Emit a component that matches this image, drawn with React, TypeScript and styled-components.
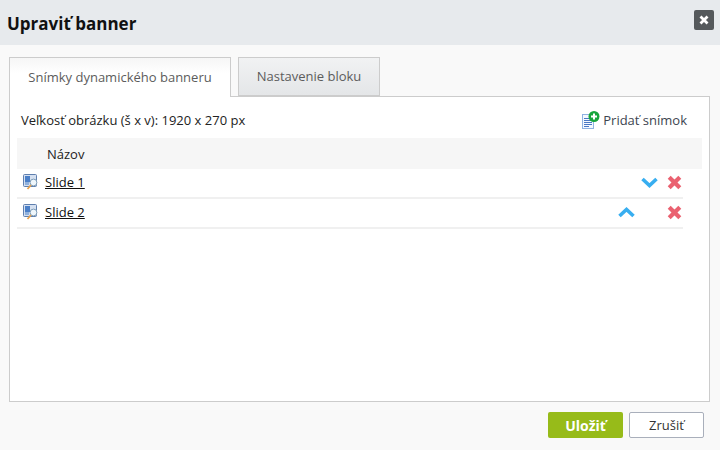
import styled, { createGlobalStyle } from "styled-components";

const GlobalStyle = createGlobalStyle`
  html, body {
    margin: 0;
    padding: 0;
  }
  body {
    font-family: "Open Sans", "Noto Sans", sans-serif;
    background: #f9f9f9;
  }
`;

const Dialog = styled.div`
  width: 720px;
  height: 450px;
  display: flex;
  flex-direction: column;
  overflow: hidden;
  background: #f9f9f9;
`;

const Header = styled.div`
  height: 45px;
  flex: none;
  background: #e7eaed;
  display: flex;
  align-items: center;
  justify-content: space-between;
  padding: 0 6px 0 7px;
`;

const Title = styled.div`
  font-size: 17px;
  font-weight: 700;
  color: #111;
  margin-top: 1px;
`;

const CloseButton = styled.button`
  width: 20px;
  height: 20px;
  padding: 0;
  border: 0;
  border-radius: 2px;
  background: #55595c;
  display: flex;
  align-items: center;
  justify-content: center;
  margin-top: -5px;
`;

const Content = styled.div`
  flex: 1;
  padding: 12px 10px 0 9px;
  display: flex;
  flex-direction: column;
`;

const Tabs = styled.div`
  display: flex;
  gap: 7px;
  height: 40px;
  flex: none;
  margin-bottom: -1px;
  position: relative;
`;

const Tab = styled.div<{ $active?: boolean }>`
  box-sizing: border-box;
  width: ${(p) => (p.$active ? "222px" : "142px")};
  height: ${(p) => (p.$active ? "40px" : "39px")};
  border: 1px solid #ccc;
  border-bottom: ${(p) => (p.$active ? "0" : "1px solid #ccc")};
  background: ${(p) =>
    p.$active
      ? "linear-gradient(#f6f6f6, #fff 40%)"
      : "linear-gradient(#f1f2f3, #e4e6e8)"};
  font-size: 13px;
  color: #5c5c5c;
  display: flex;
  align-items: center;
  justify-content: center;
  padding-bottom: 2px;
`;

const Panel = styled.div`
  box-sizing: border-box;
  height: 306px;
  background: #fff;
  border: 1px solid #ccc;
  padding: 0 6px 0 7px;
`;

const InfoBar = styled.div`
  height: 41px;
  display: flex;
  align-items: center;
  justify-content: space-between;
  padding: 4px 16px 0 4px;
  box-sizing: border-box;
  font-size: 13px;
  color: #222;
`;

const AddLink = styled.div`
  display: flex;
  align-items: center;
  gap: 3px;
  font-size: 13px;
  color: #3d4450;
`;

const TableHead = styled.div`
  width: 685px;
  height: 31px;
  background: #f6f6f6;
  display: flex;
  align-items: center;
  padding-left: 30px;
  box-sizing: border-box;
  font-size: 13px;
  color: #222;
`;

const Row = styled.div`
  box-sizing: border-box;
  width: 666px;
  height: 30px;
  border-bottom: 2px solid #f0f0f0;
  display: flex;
  align-items: center;
  padding: 0 0 3px 6px;
`;

const SlideLink = styled.a`
  margin-left: 7px;
  font-size: 13px;
  color: #111;
  text-decoration: underline;
`;

const Actions = styled.div`
  margin-left: auto;
  display: flex;
  align-items: center;
  padding: 1px 1px 0 0;
`;

const ArrowSlot = styled.div<{ $offset: number }>`
  width: 17px;
  height: 16px;
  margin-right: ${(p) => p.$offset}px;
  display: flex;
  align-items: center;
  justify-content: center;
`;

const Footer = styled.div`
  display: flex;
  justify-content: flex-end;
  gap: 6px;
  padding: 10px 6px 0 0;
`;

const SaveButton = styled.button`
  width: 75px;
  height: 26px;
  padding: 0;
  border: 0;
  border-radius: 2px;
  background: #97bb19;
  color: #fff;
  font-family: inherit;
  font-size: 14px;
  font-weight: 700;
`;

const CancelButton = styled.button`
  width: 75px;
  height: 26px;
  padding: 0;
  border: 1px solid #a9afbb;
  border-radius: 2px;
  background: #fff;
  color: #333;
  font-family: inherit;
  font-size: 13px;
`;

function CloseIcon() {
  return (
    <svg width="10" height="10" viewBox="0 0 10 10">
      <path d="M1.5 1.5 8.5 8.5M8.5 1.5 1.5 8.5" stroke="#fff" strokeWidth="2.8" />
    </svg>
  );
}

function AddIcon() {
  return (
    <svg width="18" height="18" viewBox="0 0 18 18">
      <rect x="0.5" y="3.5" width="11" height="14" fill="#f4f8ff" stroke="#8fb2e2" />
      <path d="M2 7.5h5M2 9.5h8M2 11.5h8M2 13.5h8M2 15.5h5" stroke="#4a78c4" />
      <circle cx="12" cy="5.5" r="5.5" fill="#16a53c" />
      <path d="M12 2.5v6M9 5.5h6" stroke="#fff" strokeWidth="2" />
    </svg>
  );
}

function SlideIcon() {
  return (
    <svg width="15" height="16" viewBox="0 0 15 16">
      <rect x="0.5" y="0.5" width="13" height="12" rx="1" fill="#d5e0f0" stroke="#5f7fae" />
      <rect x="2" y="2" width="5" height="6" fill="#4a7fc8" />
      <rect x="2" y="8" width="4" height="3" fill="#8fb0dc" />
      <circle cx="10.5" cy="8.5" r="3.4" fill="#eef6fb" stroke="#7d9cb8" />
      <path d="M8 11 4.5 15" stroke="#e8a24c" strokeWidth="1.8" />
    </svg>
  );
}

function Chevron({ up }: { up?: boolean }) {
  return (
    <svg width="17" height="11" viewBox="0 0 17 11">
      <path
        d={up ? "M1.5 9 8.5 2.5l7 6.5" : "M1.5 2 8.5 8.5l7-6.5"}
        fill="none"
        stroke="#38aef0"
        strokeWidth="3.6"
      />
    </svg>
  );
}

function DeleteIcon() {
  return (
    <svg width="15" height="15" viewBox="0 0 15 15">
      <path d="M2.2 2.2 12.8 12.8M12.8 2.2 2.2 12.8" stroke="#ea6170" strokeWidth="4.2" />
    </svg>
  );
}

const slides = [
  { name: "Slide 1", up: false, offset: 9 },
  { name: "Slide 2", up: true, offset: 32 },
];

export default function App() {
  return (
    <>
      <GlobalStyle />
      <Dialog>
        <Header>
          <Title>Upraviť banner</Title>
          <CloseButton>
            <CloseIcon />
          </CloseButton>
        </Header>
        <Content>
          <Tabs>
            <Tab $active>Snímky dynamického banneru</Tab>
            <Tab>Nastavenie bloku</Tab>
          </Tabs>
          <Panel>
            <InfoBar>
              <span>Veľkosť obrázku (š x v): 1920 x 270 px</span>
              <AddLink>
                <AddIcon />
                Pridať snímok
              </AddLink>
            </InfoBar>
            <TableHead>Názov</TableHead>
            {slides.map((slide) => (
              <Row key={slide.name}>
                <SlideIcon />
                <SlideLink>{slide.name}</SlideLink>
                <Actions>
                  <ArrowSlot $offset={slide.offset}>
                    <Chevron up={slide.up} />
                  </ArrowSlot>
                  <DeleteIcon />
                </Actions>
              </Row>
            ))}
          </Panel>
          <Footer>
            <SaveButton>Uložiť</SaveButton>
            <CancelButton>Zrušiť</CancelButton>
          </Footer>
        </Content>
      </Dialog>
    </>
  );
}
